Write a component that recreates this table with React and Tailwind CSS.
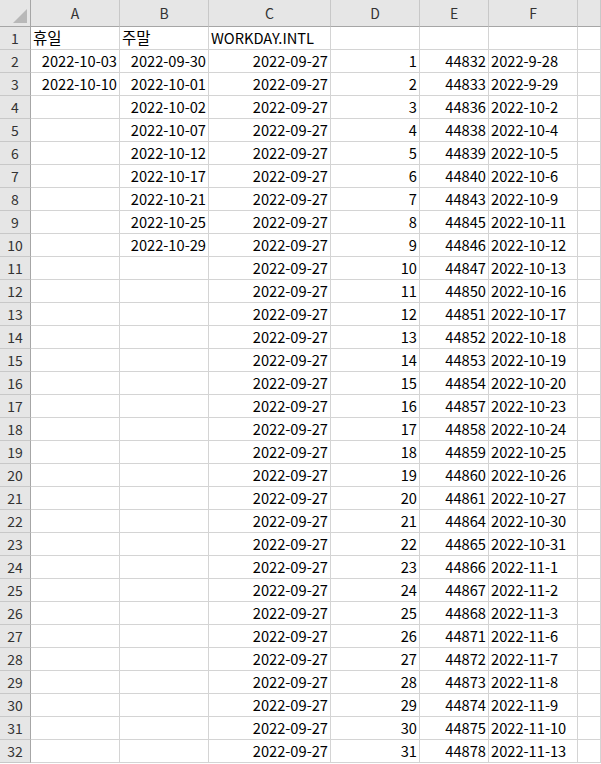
import React from "react";

const E = [44832,44833,44836,44838,44839,44840,44843,44845,44846,44847,44850,44851,44852,44853,44854,44857,44858,44859,44860,44861,44864,44865,44866,44867,44868,44871,44872,44873,44874,44875,44878];
const F = ["2022-9-28","2022-9-29","2022-10-2","2022-10-4","2022-10-5","2022-10-6","2022-10-9","2022-10-11","2022-10-12","2022-10-13","2022-10-16","2022-10-17","2022-10-18","2022-10-19","2022-10-20","2022-10-23","2022-10-24","2022-10-25","2022-10-26","2022-10-27","2022-10-30","2022-10-31","2022-11-1","2022-11-2","2022-11-3","2022-11-6","2022-11-7","2022-11-8","2022-11-9","2022-11-10","2022-11-13"];
const A = ["2022-10-03","2022-10-10"];
const B = ["2022-09-30","2022-10-01","2022-10-02","2022-10-07","2022-10-12","2022-10-17","2022-10-21","2022-10-25","2022-10-29"];

function rowData(r) {
  if (r === 1) {
    return [
      { t: "휴일", l: true, k: true },
      { t: "주말", l: true, k: true },
      { t: "WORKDAY.INTL", l: true },
      { t: "" }, { t: "" }, { t: "" }, { t: "" },
    ];
  }
  const i = r - 2;
  return [
    { t: A[i] || "" },
    { t: B[i] || "" },
    { t: "2022-09-27" },
    { t: String(i + 1) },
    { t: String(E[i]) },
    { t: F[i], l: true },
    { t: "" },
  ];
}

const cols = ["A", "B", "C", "D", "E", "F", ""];

export default function App() {
  const rows = Array.from({ length: 32 }, (_, k) => k + 1);
  return (
    <div className="w-[601px] h-[764px] overflow-hidden bg-white" style={{ fontFamily: '"Noto Sans CJK KR", "Noto Sans", sans-serif' }}>
      <div className="grid grid-cols-[31px_89px_89px_122px_89px_69px_89px_1fr]">
        <div className="h-[27px] bg-[#e6e6e6] border-r border-b border-[#a6a6a6] relative">
          <svg className="absolute left-0 top-0" width="30" height="26" viewBox="0 0 30 26">
            <polygon points="27,9 27,23 13,23" fill="#b8b8b8" />
          </svg>
        </div>
        {cols.map((c, j) => (
          <div
            key={j}
            className="h-[27px] bg-[#e6e6e6] border-r border-b border-r-[#c8c8c8] border-b-[#a6a6a6] flex items-center justify-center text-[14px] text-[#333]"
          >
            {c}
          </div>
        ))}
        {rows.map((r) => (
          <React.Fragment key={r}>
            <div className="h-[23px] bg-[#e6e6e6] border-r border-b border-r-[#a6a6a6] border-b-[#c8c8c8] flex items-center justify-center text-[14px] text-[#333]">
              {r}
            </div>
            {rowData(r).map((c, j) => (
              <div
                key={j}
                className={
                  "h-[23px] border-r border-b border-[#d4d4d4] flex items-center whitespace-nowrap overflow-visible text-black leading-none " +
                  (c.k ? "text-[15.5px] " : "text-[14.67px] ") +
                  (c.l ? "justify-start pl-[2px]" : "justify-end pr-[2px]")
                }
              >
                {c.t}
              </div>
            ))}
          </React.Fragment>
        ))}
      </div>
    </div>
  );
}
